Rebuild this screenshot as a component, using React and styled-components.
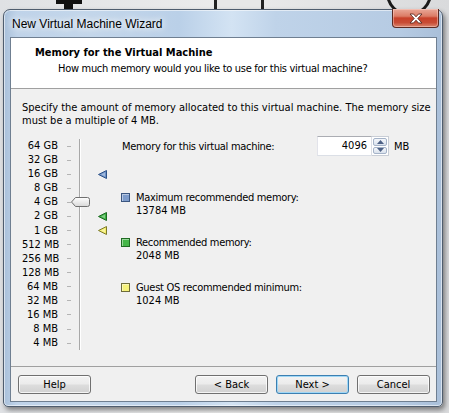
import styled, { createGlobalStyle } from 'styled-components'

const GlobalStyle = createGlobalStyle`
	html, body {
		margin: 0;
		padding: 0;
	}
	body {
		background: #e4e5e7;
		font-family: "DejaVu Sans Condensed", "DejaVu Sans", sans-serif;
		font-stretch: condensed;
		font-size: 11px;
		color: #000;
		overflow: hidden;
	}
`

const SIZES = [
	'64 GB', '32 GB', '16 GB', '8 GB', '4 GB', '2 GB', '1 GB',
	'512 MB', '256 MB', '128 MB', '64 MB', '32 MB', '16 MB', '8 MB', '4 MB',
]

const MARKERS = {
	'16 GB': { fill: '#6f93c8', stroke: '#2e5288' },
	'2 GB': { fill: '#3cb043', stroke: '#1d6a22' },
	'1 GB': { fill: '#f4ee6a', stroke: '#7d7a2a' },
}

const LEGEND = [
	{ title: 'Maximum recommended memory:', value: '13784 MB', fill: '#7e9ccb', stroke: '#3b5680' },
	{ title: 'Recommended memory:', value: '2048 MB', fill: '#45b648', stroke: '#1f6b22' },
	{ title: 'Guest OS recommended minimum:', value: '1024 MB', fill: '#f6f27a', stroke: '#6e6c3a' },
]

const Thumb = () => (
	<svg width="19" height="10" viewBox="0 0 19 10">
		<defs>
			<linearGradient id="thumbFill" x1="0" y1="0" x2="0" y2="1">
				<stop offset="0" stopColor="#ffffff" />
				<stop offset="1" stopColor="#d8d8d8" />
			</linearGradient>
		</defs>
		<path
			d="M0.5 5 L4.5 0.5 H16.5 Q18.5 0.5 18.5 2.5 V7.5 Q18.5 9.5 16.5 9.5 H4.5 Z"
			fill="url(#thumbFill)"
			stroke="#707070"
		/>
	</svg>
)

const Arrow = ({ fill, stroke }) => (
	<svg width="9" height="9" viewBox="0 0 9 9">
		<path d="M0.5 4.5 L8.5 0.5 V8.5 Z" fill={fill} stroke={stroke} strokeLinejoin="round" />
		<path d="M3 4.5 L7 2.5 V6.5 Z" fill="#ffffff" opacity="0.35" />
	</svg>
)

const SpinArrow = ({ up }) => (
	<svg width="7" height="4" viewBox="0 0 7 4">
		<path d={up ? 'M0 4 L3.5 0 L7 4 Z' : 'M0 0 L3.5 4 L7 0 Z'} fill="#4d6185" />
	</svg>
)

const App = () => {
	return (
		<>
			<GlobalStyle />
			<Desktop>
				<DeskBar />
				<DeskStem />
				<DeskFrame />
				<DeskCircle />
				<Window>
					<TitleBar>
						<TitleText>New Virtual Machine Wizard</TitleText>
						<CloseButton aria-label="Close">
							<svg width="14" height="11" viewBox="0 0 14 11">
								<path
									d="M1 1 H4.5 L7 3.8 L9.5 1 H13 L8.8 5.5 L13 10 H9.5 L7 7.2 L4.5 10 H1 L5.2 5.5 Z"
									fill="#ffffff"
									stroke="#5a2a22"
									strokeWidth="0.9"
									strokeLinejoin="round"
								/>
							</svg>
						</CloseButton>
					</TitleBar>
					<Client>
						<Header>
							<HeaderTitle>Memory for the Virtual Machine</HeaderTitle>
							<HeaderSub>How much memory would you like to use for this virtual machine?</HeaderSub>
						</Header>
						<Body>
							<Main>
								<Intro>
									<span>Specify the amount of memory allocated to this virtual machine. The memory size</span>
									<span>must be a multiple of 4 MB.</span>
								</Intro>
								<Columns>
									<Slider>
										{SIZES.map((size) => (
											<SliderRow key={size}>
												<SizeLabel>{size}</SizeLabel>
												<Tick />
												<Track>{size === '4 GB' && <Thumb />}</Track>
												<MarkerCell>
													{MARKERS[size] && <Arrow {...MARKERS[size]} />}
												</MarkerCell>
											</SliderRow>
										))}
									</Slider>
									<Details>
										<MemoryRow>
											<MemoryLabel>Memory for this virtual machine:</MemoryLabel>
											<NumberBox>4096</NumberBox>
											<Spin>
												<SpinButton>
													<SpinArrow up />
												</SpinButton>
												<SpinButton>
													<SpinArrow />
												</SpinButton>
											</Spin>
											<Unit>MB</Unit>
										</MemoryRow>
										<LegendList>
											{LEGEND.map((item) => (
												<LegendItem key={item.title}>
													<LegendTitle>
														<Swatch $fill={item.fill} $stroke={item.stroke} />
														{item.title}
													</LegendTitle>
													<LegendValue>{item.value}</LegendValue>
												</LegendItem>
											))}
										</LegendList>
									</Details>
								</Columns>
							</Main>
							<Footer>
								<Button>Help</Button>
								<ButtonGroup>
									<Button>&lt; Back</Button>
									<Button $default>Next &gt;</Button>
									<Button>Cancel</Button>
								</ButtonGroup>
							</Footer>
						</Body>
					</Client>
				</Window>
			</Desktop>
		</>
	)
}

export default App

const Desktop = styled.div`
	position: relative;
	width: 449px;
	height: 413px;
	padding: 9px 0 0 3px;
	box-sizing: border-box;
	overflow: hidden;
	background: linear-gradient(90deg, #dfe1e4 0%, #ececec 50%, #d9dadc 100%);
`

/* bits of the desktop showing above the window */
const DeskBar = styled.div`
	position: absolute;
	left: 56px;
	top: 0;
	width: 26px;
	height: 4px;
	background: #111;
`
const DeskStem = styled.div`
	position: absolute;
	left: 64px;
	top: 0;
	width: 9px;
	height: 12px;
	background: #111;
`
const DeskFrame = styled.div`
	position: absolute;
	left: 214px;
	top: -10px;
	width: 44px;
	height: 22px;
	border: 3px solid #222;
	border-radius: 4px;
	background: #e8e8e8;
`
const DeskCircle = styled.div`
	position: absolute;
	left: 386px;
	top: -30px;
	width: 40px;
	height: 40px;
	border: 3px solid #1a1a1a;
	border-radius: 50%;
`

const Window = styled.div`
	position: relative;
	z-index: 1;
	width: 440px;
	height: 398px;
	box-sizing: border-box;
	border: 1px solid #4f5d6e;
	border-radius: 7px 7px 5px 5px;
	background: linear-gradient(90deg, #a9c0da 0%, #bfd3e9 3%, #c3d6ea 20%, #bad0e8 40%, #d3e3f3 52%, #bfd3e9 62%, #b6cbe3 90%, #a9bfd9 100%);
	box-shadow: inset 0 0 0 1px rgba(255, 255, 255, 0.55), 2px 3px 5px rgba(0, 0, 0, 0.45);
	display: flex;
	flex-direction: column;
	padding: 0 5px 4px 6px;
`

const TitleBar = styled.div`
	height: 27px;
	display: flex;
	justify-content: space-between;
	align-items: flex-start;
	padding-left: 2px;
`

const TitleText = styled.span`
	margin-top: 6px;
	font-family: "Liberation Sans", Arial, sans-serif;
	font-stretch: normal;
	font-size: 12px;
	line-height: 16px;
	color: #000;
	text-shadow: 0 0 6px #fff, 0 0 10px rgba(255, 255, 255, 0.9);
`

const CloseButton = styled.div`
	margin: -1px -2px 0 0;
	width: 47px;
	height: 19px;
	box-sizing: border-box;
	border: 1px solid #5c2a22;
	border-top: none;
	border-radius: 0 0 4px 4px;
	background: linear-gradient(#e9a898 0%, #dc7c66 40%, #c8412a 50%, #c84b34 75%, #d9866f 100%);
	box-shadow: inset 0 0 0 1px rgba(255, 220, 210, 0.45);
	display: flex;
	align-items: center;
	justify-content: center;
`

const Client = styled.div`
	flex: 1;
	display: flex;
	flex-direction: column;
	border: 1px solid #6f7f91;
	background: #f0f0f0;
`

const Header = styled.div`
	height: 51px;
	box-sizing: border-box;
	background: #fff;
	border-bottom: 1px solid #a0a0a0;
	padding: 8px 0 0 24px;
	line-height: 14px;
`

const HeaderTitle = styled.div`
	font-weight: bold;
`

const HeaderSub = styled.div`
	margin-top: 2px;
	padding-left: 23px;
	letter-spacing: -0.3px;
`

const Body = styled.div`
	flex: 1;
	display: flex;
	flex-direction: column;
`

const Main = styled.div`
	flex: 1;
	padding: 12px 0 0 11px;
`

const Intro = styled.div`
	display: flex;
	flex-direction: column;
	line-height: 13px;
	white-space: nowrap;
`

const Columns = styled.div`
	margin-top: 12px;
	display: grid;
	grid-template-columns: 88px 1fr;
	column-gap: 11px;
	align-items: start;
`

const Slider = styled.div`
	display: flex;
	flex-direction: column;
`

const SliderRow = styled.div`
	height: 14.08px;
	display: grid;
	grid-template-columns: 37px 8px 4px 20px 19px;
	align-items: center;
`

const SizeLabel = styled.span`
	text-align: right;
	padding-right: 1px;
	white-space: nowrap;
	line-height: 14px;
`

const Tick = styled.span`
	grid-column: 3;
	height: 1px;
	background: #b4b4b4;
`

const Track = styled.div`
	align-self: stretch;
	display: flex;
	align-items: center;
	background: linear-gradient(90deg, transparent 8px, #a8a8a8 8px, #a8a8a8 9px, #ffffff 9px, #ffffff 10px, transparent 10px);
`

const MarkerCell = styled.div`
	display: flex;
	align-items: center;
	padding-left: 7px;
`

const Details = styled.div`
	margin-top: -3px;
`

const MemoryRow = styled.div`
	display: flex;
	align-items: center;
	height: 20px;
	padding-left: 1px;
`

const MemoryLabel = styled.span`
	width: 195px;
	white-space: nowrap;
	letter-spacing: -0.3px;
`

const NumberBox = styled.div`
	width: 55px;
	height: 20px;
	box-sizing: border-box;
	border: 1px solid #dbdfe6;
	border-top-color: #abadb3;
	border-left-color: #e2e3ea;
	background: #fff;
	text-align: right;
	padding-right: 4px;
	line-height: 18px;
`

const Spin = styled.div`
	width: 17px;
	height: 20px;
	box-sizing: border-box;
	border: 1px solid #c9ced6;
	border-left: none;
	background: #fff;
	display: flex;
	flex-direction: column;
	gap: 1px;
	padding: 1px;
`

const SpinButton = styled.div`
	flex: 1;
	border: 1px solid #a5b3c8;
	border-radius: 2px;
	background: linear-gradient(#f4f7fb, #d9e1ec);
	display: flex;
	align-items: center;
	justify-content: center;
`

const Unit = styled.span`
	margin-left: 5px;
`

const LegendList = styled.div`
	margin-top: 35px;
	display: flex;
	flex-direction: column;
	gap: 19px;
`

const LegendItem = styled.div`
	line-height: 13px;
`

const LegendTitle = styled.div`
	display: flex;
	align-items: center;
	gap: 6px;
	white-space: nowrap;
	letter-spacing: -0.3px;
`

const Swatch = styled.span`
	width: 9px;
	height: 9px;
	box-sizing: border-box;
	background: ${(p) => p.$fill};
	border: 1px solid ${(p) => p.$stroke};
	box-shadow: inset 1px 1px 0 rgba(255, 255, 255, 0.45);
`

const LegendValue = styled.div`
	padding-left: 15px;
`

const Footer = styled.div`
	border-top: 1px solid #a0a0a0;
	padding: 8px 6px 7px 7px;
	display: flex;
	justify-content: space-between;
`

const ButtonGroup = styled.div`
	display: flex;
	gap: 8px;
`

const Button = styled.button`
	width: 73px;
	height: 19px;
	box-sizing: border-box;
	padding: 0;
	font-family: inherit;
	font-stretch: inherit;
	font-size: 11px;
	color: #000;
	border: 1px solid ${(p) => (p.$default ? '#3c7fb1' : '#707070')};
	border-radius: 3px;
	background: linear-gradient(#f3f3f3 0%, #ebebeb 48%, #dddddd 52%, #d1d1d1 100%);
	box-shadow: inset 0 0 0 1px ${(p) => (p.$default ? '#9fd7f6' : 'rgba(255, 255, 255, 0.75)')};
`
